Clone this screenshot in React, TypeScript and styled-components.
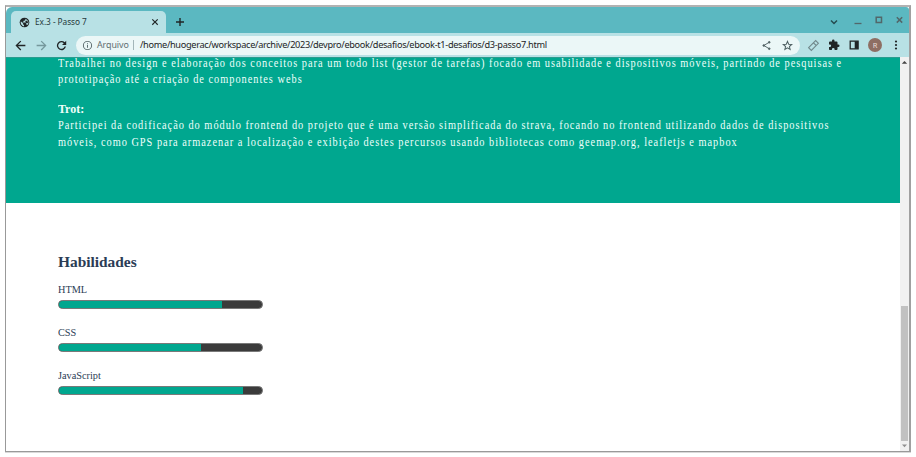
import React from "react";
import styled, { createGlobalStyle } from "styled-components";

const Global = createGlobalStyle`
  * { box-sizing: border-box; }
  html, body { margin: 0; padding: 0; background: #fff; overflow: hidden; }
  p, h2, h3 { margin: 0; }
`;

const Screen = styled.div`
  width: 916px;
  height: 457px;
  padding: 5px 4px 4px 5px;
  background: #fff;
`;

const Frame = styled.div`
  width: 906px;
  height: 447px;
  display: flex;
  flex-direction: column;
  border: 1px solid #999;
  border-top: 2px solid #b2b2b2;
  border-right: 2px solid #a0a0a0;
  box-shadow: 0 1px 0 #d9d9d9;
  overflow: hidden;
  font-family: "Noto Sans", "Open Sans", sans-serif;
`;

const TabStrip = styled.div`
  height: 26px;
  flex: none;
  display: flex;
  align-items: flex-end;
  background: #5bb8c1;
  border-radius: 6px 3px 0 0;
`;

const Tab = styled.div`
  width: 155px;
  height: 22px;
  margin-left: 5px;
  padding: 0 6px 0 8px;
  display: flex;
  align-items: center;
  gap: 5px;
  border-radius: 5px 5px 0 0;
  background: #b8e1e5;
  color: #26393c;
`;

const TabTitle = styled.span`
  flex: 1;
  font-size: 8.3px;
  line-height: 12px;
  letter-spacing: -0.05px;
  white-space: nowrap;
`;

const NewTab = styled.div`
  display: flex;
  height: 22px;
  align-items: center;
  margin-left: 8px;
`;

const WindowControls = styled.div`
  display: flex;
  align-items: center;
  height: 26px;
  margin-left: auto;
  padding-right: 4px;
  gap: 9px;
`;

const Toolbar = styled.div`
  height: 24px;
  flex: none;
  display: flex;
  align-items: center;
  padding: 0 7px 0 8px;
  background: #b8e1e5;
`;

const NavButtons = styled.div`
  display: flex;
  gap: 7.5px;
  width: 62px;
`;

const AddressBar = styled.div`
  width: 724px;
  height: 19px;
  display: flex;
  align-items: center;
  padding: 0 7px 0 6px;
  border-radius: 10px;
  background: #ebf7f7;
  white-space: nowrap;
  line-height: 14px;
`;

const Scheme = styled.span`
  width: 36px;
  margin-left: 4px;
  font-size: 8.9px;
  letter-spacing: -0.08px;
  color: #5f6e71;
`;

const Divider = styled.span`
  width: 1px;
  height: 10px;
  background: #a3b6b9;
`;

const Path = styled.span`
  flex: 1;
  margin-left: 6px;
  font-size: 9.2px;
  letter-spacing: -0.31px;
  color: #1c2325;
`;

const AddressActions = styled.div`
  display: flex;
  gap: 10px;
`;

const Extensions = styled.div`
  display: flex;
  align-items: center;
  gap: 8px;
  margin-left: auto;
`;

const Avatar = styled.span`
  width: 14px;
  height: 14px;
  display: flex;
  align-items: center;
  justify-content: center;
  border-radius: 50%;
  background: #8e6e63;
  color: #e9dedb;
  font-size: 7.5px;
  line-height: 10px;
`;

const Viewport = styled.div`
  flex: 1;
  min-height: 0;
  display: flex;
`;

const Page = styled.div`
  width: 894px;
  font-family: "Liberation Serif", serif;
`;

const Projects = styled.section`
  display: flow-root;
  height: 145.5px;
  padding-left: 52px;
  background: #00a78f;
  border-top: 1px solid #2a9c8f;
  color: #effffb;
`;

/* Slightly condensed body text */
const Line = styled.p`
  font-size: 11.5px;
  line-height: 16.7px;
  letter-spacing: 1.112px;
  white-space: nowrap;
  transform: scaleX(0.897);
  transform-origin: left center;
`;

const Description = styled.div<{ $first?: boolean }>`
  margin-top: ${({ $first }) => ($first ? "-3.4px" : "0")};
`;

const ProjectName = styled.h3`
  margin-top: 13.8px;
  font-size: 12.6px;
  line-height: 15.6px;
  transform: scaleX(0.95);
  transform-origin: left center;
`;

const Skills = styled.section`
  padding: 49.5px 0 0 52px;
  color: #2b3c55;
`;

const Heading = styled.h2`
  font-size: 15.4px;
  line-height: 20px;
`;

const Skill = styled.div`
  margin-top: 10px;
  height: 33px;
`;

const SkillName = styled.p`
  font-size: 11px;
  line-height: 14px;
  transform: scaleX(0.935);
  transform-origin: left center;
`;

const Track = styled.div`
  width: 205px;
  height: 9px;
  margin-top: 4px;
  border: 1px solid #797979;
  border-radius: 5px;
  overflow: hidden;
  background: #3b3b3b;
`;

const Fill = styled.div<{ $level: number }>`
  width: ${({ $level }) => $level}%;
  height: 100%;
  background: #00a78f;
`;

const Scrollbar = styled.div`
  width: 9px;
  display: flex;
  flex-direction: column;
  align-items: center;
  justify-content: space-between;
  background: #f1f1f1;
`;

const ScrollEnd = styled.div`
  display: flex;
  flex-direction: column;
  align-items: center;
`;

const Thumb = styled.div`
  width: 7px;
  height: 135px;
  background: #c1c1c1;
`;

const Glyph = styled.svg`
  display: block;
  flex: none;
`;

const Arrow = ({ down = false }: { down?: boolean }) => (
  <Glyph width="9" height="10" viewBox="0 0 9 10">
    <path d={down ? "M2 3.5h5L4.5 6.3z" : "M1.8 6.8h5.4L4.5 4z"} fill={down ? "#8f8f8f" : "#444"} />
  </Glyph>
);

type IconProps = { size?: number; color?: string; children: React.ReactNode };

const Icon = ({ size = 12, color = "#202526", children }: IconProps) => (
  <Glyph width={size} height={size} viewBox="0 0 24 24" fill={color}>
    {children}
  </Glyph>
);

const skills = [
  { name: "HTML", level: 80.5 },
  { name: "CSS", level: 70.1 },
  { name: "JavaScript", level: 90.5 },
];

export default function App() {
  return (
    <Screen>
      <Global />
      <Frame>
        <TabStrip>
          <Tab>
            <Icon size={11}>
              <circle cx="12" cy="12" r="10.5" />
              <path
                d="M4 9l5 5v2l2 2v2.500A9 9 0 0 1 4 9zM14 4v2l-2 2h-2v2l-2 1v1h6l1.500 1.500v3h1.500l1.500 1A8.500 8.500 0 0 0 18 6.500z"
                fill="#b8e1e5"
              />
              <path d="M14 8h4l2 4-3 2-3-2z" />
            </Icon>
            <TabTitle>Ex.3 - Passo 7</TabTitle>
            <Icon size={10}>
              <path d="M4.500 6.500l2-2 5.500 5.500 5.500-5.500 2 2-5.500 5.500 5.500 5.500-2 2-5.500-5.500-5.500 5.500-2-2 5.500-5.500z" />
            </Icon>
          </Tab>
          <NewTab>
            <Icon>
              <path d="M10.600 4h2.800v6.600H20v2.800h-6.600V20h-2.800v-6.600H4v-2.800h6.600z" />
            </Icon>
          </NewTab>
          <WindowControls>
            <Glyph width="12" height="12" viewBox="0 0 12 12" fill="none" stroke="#264a4f" strokeWidth="1.5">
              <path d="M3 6.500l3 3 3-3" />
            </Glyph>
            <Glyph width="15" height="12" viewBox="0 0 15 12" fill="none" stroke="#52676a" strokeWidth="1.300">
              <path d="M5.500 9.500h7" />
            </Glyph>
            <Glyph width="12" height="12" viewBox="0 0 12 12" fill="none" stroke="#52676a" strokeWidth="1.500">
              <path d="M3.200 3.200h5.300v5.300H3.200z" />
            </Glyph>
            <Glyph width="11" height="12" viewBox="0 0 11 12" fill="none" stroke="#52676a" strokeWidth="1.500">
              <path d="M2.800 3.200l5.400 5.400m0-5.400L2.800 8.600" />
            </Glyph>
          </WindowControls>
        </TabStrip>
        <Toolbar>
          <NavButtons>
            <Icon size={13}>
              <path d="M21 10.700H7.400l6-6L11.700 3 2.700 12l9 9 1.700-1.700-6-6H21z" />
            </Icon>
            <Icon size={13} color="#75989c">
              <path d="M3 10.700h13.600l-6-6L12.300 3l9 9-9 9-1.700-1.700 6-6H3z" />
            </Icon>
            <Icon size={13}>
              <path d="M18 6A8.500 8.500 0 1 0 20.300 14h-2.700a6 6 0 1 1-1.500-6.200L13 11h7.700V3.300z" />
            </Icon>
          </NavButtons>
          <AddressBar>
            <Icon size={11} color="#526366">
              <path d="M11 7h2v2h-2zm0 4h2v6h-2zm1-9a10 10 0 1 0 0 20 10 10 0 0 0 0-20zm0 18a8 8 0 1 1 0-16 8 8 0 0 1 0 16z" />
            </Icon>
            <Scheme>Arquivo</Scheme>
            <Divider />
            <Path>/home/huogerac/workspace/archive/2023/devpro/ebook/desafios/ebook-t1-desafios/d3-passo7.html</Path>
            <AddressActions>
              <Glyph width="11" height="11" viewBox="0 0 24 24" fill="none" stroke="#4f6063" strokeWidth="2">
                <path d="M18 5L6 12l12 7" />
                <circle cx="18" cy="5" r="1.800" fill="#4f6063" />
                <circle cx="6" cy="12" r="1.800" fill="#4f6063" />
                <circle cx="18" cy="19" r="1.800" fill="#4f6063" />
              </Glyph>
              <Glyph width="11" height="11" viewBox="0 0 24 24" fill="none" stroke="#4f6063" strokeWidth="2.200">
                <path d="M12 3l2.600 6.200 6.700.6-5.100 4.400 1.600 6.600-5.800-3.500-5.800 3.500 1.600-6.600-5.100-4.400 6.700-.6z" />
              </Glyph>
            </AddressActions>
          </AddressBar>
          <Extensions>
            <Glyph width="13" height="13" viewBox="0 0 24 24" fill="none" stroke="#71888b" strokeWidth="2">
              <path d="M3 16L16 3l5 5L8 21zM12 7l5 5" />
            </Glyph>
            <Icon>
              <path d="M20.500 11H19V7a2 2 0 0 0-2-2h-4V3.500a2.500 2.500 0 0 0-5 0V5H4a2 2 0 0 0-2 2v3.800h1.500a2.700 2.700 0 0 1 0 5.400H2V20c0 1.100.9 2 2 2h3.800v-1.500a2.700 2.700 0 0 1 5.400 0V22H17a2 2 0 0 0 2-2v-4h1.500a2.500 2.500 0 0 0 0-5z" />
            </Icon>
            <Glyph width="12" height="12" viewBox="0 0 12 12">
              <path d="M2.200 2.200h7.900v7.600H2.200z" fill="none" stroke="#202526" strokeWidth="1.300" />
              <path d="M6.700 2.200h3.400v7.600H6.700z" fill="#202526" />
            </Glyph>
            <Avatar>R</Avatar>
            <Icon>
              <circle cx="12" cy="5" r="2.200" />
              <circle cx="12" cy="12" r="2.200" />
              <circle cx="12" cy="19" r="2.200" />
            </Icon>
          </Extensions>
        </Toolbar>
        <Viewport>
          <Page>
            <Projects>
              <Description $first>
                <Line>
                  Trabalhei no design e elaboração dos conceitos para um todo list (gestor de tarefas) focado em usabilidade e dispositivos móveis, partindo de pesquisas e
                </Line>
                <Line>prototipação até a criação de componentes webs</Line>
              </Description>
              <ProjectName>Trot:</ProjectName>
              <Description>
                <Line>
                  Participei da codificação do módulo frontend do projeto que é uma versão simplificada do strava, focando no frontend utilizando dados de dispositivos
                </Line>
                <Line>
                  móveis, como GPS para armazenar a localização e exibição destes percursos usando bibliotecas como geemap.org, leafletjs e mapbox
                </Line>
              </Description>
            </Projects>
            <Skills>
              <Heading>Habilidades</Heading>
              {skills.map(({ name, level }) => (
                <Skill key={name}>
                  <SkillName>{name}</SkillName>
                  <Track>
                    <Fill $level={level} />
                  </Track>
                </Skill>
              ))}
            </Skills>
          </Page>
          <Scrollbar>
            <Arrow />
            <ScrollEnd>
              <Thumb />
              <Arrow down />
            </ScrollEnd>
          </Scrollbar>
        </Viewport>
      </Frame>
    </Screen>
  );
}
